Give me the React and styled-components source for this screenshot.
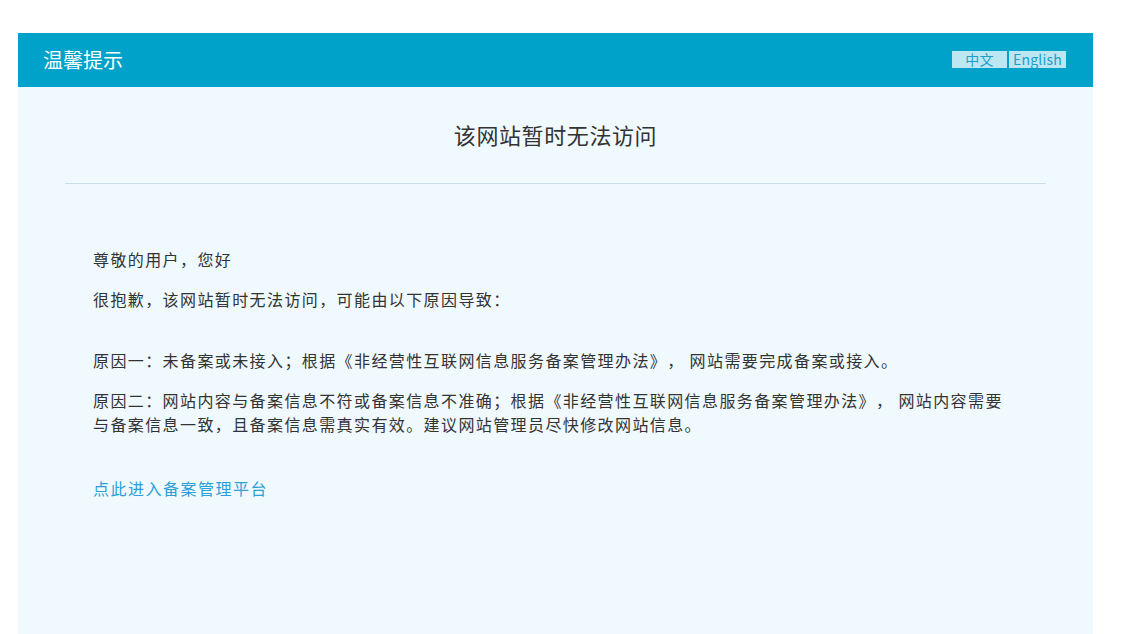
import React from "react";
import styled, { createGlobalStyle } from "styled-components";

const Global = createGlobalStyle`
  html, body { margin: 0; padding: 0; background: #ffffff; }
  body {
    font-family: "Noto Sans CJK SC", "Noto Sans", sans-serif;
    text-spacing-trim: space-all;
  }
`;

const Page = styled.div`
  padding: 33px 47px 0 18px;
`;

const Panel = styled.div`
  width: 1075px;
  background: #eff9fe;
  min-height: 601px;
`;

const Header = styled.div`
  height: 54px;
  background: #00a2c9;
  display: flex;
  align-items: center;
  justify-content: space-between;
  padding: 0 27px 0 25px;
  box-sizing: border-box;
`;

const HeaderTitle = styled.div`
  color: #ffffff;
  font-size: 20px;
  line-height: 24px;
  margin-top: -1px;
`;

const LangGroup = styled.div`
  display: flex;
  gap: 2px;
  margin-top: -1px;
`;

const LangButton = styled.a`
  display: flex;
  align-items: center;
  justify-content: center;
  width: ${(p) => p.$w}px;
  height: 17px;
  background: #bde6f3;
  color: #1a9fc8;
  font-size: 14px;
  line-height: 17px;
  letter-spacing: 0.2px;
  text-decoration: none;
  cursor: pointer;
`;

const Body = styled.div`
  padding: 0 47px;
`;

const Title = styled.h2`
  margin: 0;
  padding: 32px 0 34px;
  text-align: center;
  font-size: 22px;
  font-weight: normal;
  line-height: 30px;
  letter-spacing: 0.6px;
  color: #333333;
  border-bottom: 1px solid #c8dfe8;
`;

const Content = styled.div`
  padding: 63px 28px 60px;
  color: #333333;
  font-size: 16px;
  line-height: 24px;
  letter-spacing: 1.4px;
`;

const Para = styled.p`
  margin: 0 0 ${(p) => p.$mb || 16}px;
`;

const Link = styled.a`
  color: #2b9fd6;
  text-decoration: none;
  font-size: 16px;
  line-height: 24px;
  letter-spacing: 1.5px;
`;

export default function App() {
  return (
    <>
      <Global />
      <Page>
        <Panel>
          <Header>
            <HeaderTitle>温馨提示</HeaderTitle>
            <LangGroup>
              <LangButton $w={55}>中文</LangButton>
              <LangButton $w={57}>English</LangButton>
            </LangGroup>
          </Header>
          <Body>
            <Title>该网站暂时无法访问</Title>
            <Content>
              <Para>尊敬的用户，您好</Para>
              <Para $mb={37}>很抱歉，该网站暂时无法访问，可能由以下原因导致：</Para>
              <Para>原因一：未备案或未接入；根据《非经营性互联网信息服务备案管理办法》， 网站需要完成备案或接入。</Para>
              <Para $mb={40}>原因二：网站内容与备案信息不符或备案信息不准确；根据《非经营性互联网信息服务备案管理办法》， 网站内容需要与备案信息一致，且备案信息需真实有效。建议网站管理员尽快修改网站信息。</Para>
              <Link href="#">点此进入备案管理平台</Link>
            </Content>
          </Body>
        </Panel>
      </Page>
    </>
  );
}
